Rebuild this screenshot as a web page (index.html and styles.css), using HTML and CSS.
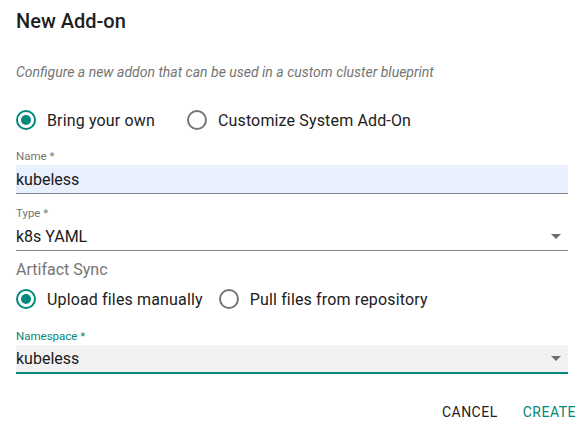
FILE: index.html
```html
<!DOCTYPE html>
<html>
<head>
<meta charset="utf-8">
<link rel="stylesheet" href="styles.css">
</head>
<body>
<div class="dialog">
  <h2 class="title">New Add-on</h2>
  <p class="desc">Configure a new addon that can be used in a custom cluster blueprint</p>
  <div class="radios top">
    <label class="radio"><span class="dot on"></span>Bring your own</label>
    <label class="radio"><span class="dot"></span>Customize System Add-On</label>
  </div>
  <div class="field name">
    <div class="label">Name *</div>
    <div class="input">kubeless</div>
  </div>
  <div class="field type">
    <div class="label">Type *</div>
    <div class="input select">k8s YAML<span class="arrow"></span></div>
  </div>
  <div class="section">Artifact Sync</div>
  <div class="radios sync">
    <label class="radio"><span class="dot on"></span>Upload files manually</label>
    <label class="radio"><span class="dot"></span>Pull files from repository</label>
  </div>
  <div class="field focused">
    <div class="label">Namespace *</div>
    <div class="input select">kubeless<span class="arrow"></span></div>
  </div>
  <div class="actions">
    <button class="btn">CANCEL</button>
    <button class="btn primary">CREATE</button>
  </div>
</div>
</body>
</html>
```
FILE: styles.css
```css
* { box-sizing: border-box; }
body {
  margin: 0;
  background: #fff;
  font-family: Roboto, "Liberation Sans", sans-serif;
  color: rgba(0,0,0,0.87);
}
.dialog {
  width: 586px;
  padding: 9px 18px 0 16px;
}
.title {
  margin: 0;
  font-size: 20px;
  font-weight: 500;
  line-height: 24px;
  color: #1e1e1e;
}
.desc {
  margin: 29px 0 0;
  font-size: 14px;
  font-style: italic;
  color: #757575;
  line-height: 20px;
}
.radios {
  display: flex;
  align-items: center;
  gap: 16px;
  height: 24px;
}
.radios.top { margin-top: 26px; gap: 32px; }
.radios.sync { margin-top: 7px; }
.radio {
  display: flex;
  align-items: center;
  font-size: 16px;
  letter-spacing: 0.15px;
  color: #212121;
}
.dot {
  width: 20px;
  height: 20px;
  border-radius: 50%;
  border: 2px solid #757575;
  margin-right: 11px;
  position: relative;
  flex: none;
}
.dot.on { border-color: #00897b; }
.dot.on::after {
  content: "";
  position: absolute;
  left: 3px; top: 3px;
  width: 10px; height: 10px;
  border-radius: 50%;
  background: #00897b;
}
.label {
  font-size: 11.5px;
  line-height: 14px;
  color: #757575;
}
.input {
  display: flex;
  align-items: center;
  justify-content: space-between;
  height: 29px;
  margin-top: 2px;
  font-size: 16px;
  color: #1a1a1a;
  border-bottom: 1px solid #8a8a8a;
}
.field.name { margin-top: 17px; }
.field.name .input { background: #e8f0fe; border-bottom-color: #7b808a; }
.field.type { margin-top: 12px; }
.section {
  margin-top: 9px;
  font-size: 16px;
  color: #757575;
  line-height: 20px;
}
.field.focused { margin-top: 18px; }
.focused .label { color: #00897b; }
.focused .input { background: #f2f2f2; border-bottom: 2px solid #00897b; }
.arrow {
  width: 0; height: 0;
  border-left: 5px solid transparent;
  border-right: 5px solid transparent;
  border-top: 5px solid #6e6e6e;
  margin-right: 7px;
}
.actions {
  display: flex;
  justify-content: flex-end;
  gap: 25px;
  margin: 28px -8px 0 0;
}
.btn {
  background: none;
  border: none;
  padding: 0;
  font-family: inherit;
  font-size: 14px;
  line-height: 20px;
  font-weight: 400;
  letter-spacing: 0.5px;
  color: #222;
}
.btn.primary { color: #00897b; }
```
